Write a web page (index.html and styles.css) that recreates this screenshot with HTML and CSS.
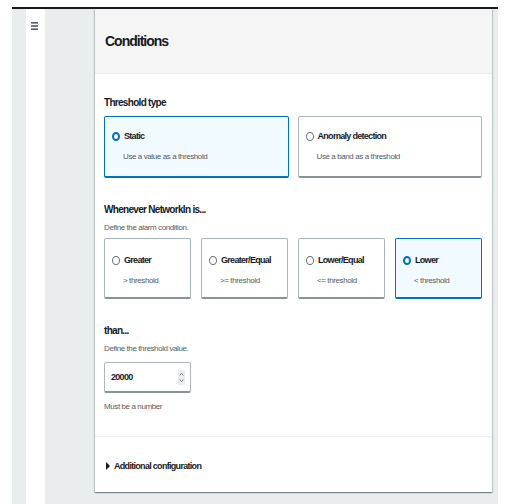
FILE: index.html
```html
<!DOCTYPE html>
<html lang="en">
<head>
    <meta charset="UTF-8">
    <meta name="viewport" content="width=device-width, initial-scale=1.0">
    <title>Conditions</title>
    <link rel="stylesheet" href="styles.css">
</head>
<body>
    <div class="frame">
        <nav class="rail">
            <svg class="menu-icon" width="7" height="8" viewBox="0 0 7 8">
                <rect x="0" y="0" width="7" height="1.6" fill="#545b64"/>
                <rect x="0" y="3.2" width="7" height="1.6" fill="#545b64"/>
                <rect x="0" y="6.4" width="7" height="1.6" fill="#545b64"/>
            </svg>
        </nav>

        <main class="content">
            <section class="panel">
                <header class="panel-head">
                    <h2>Conditions</h2>
                </header>

                <div class="panel-body">
                    <div class="field first">
                        <div class="label">Threshold type</div>
                        <div class="tiles two">
                            <div class="tile selected">
                                <div class="tile-title"><span class="radio on"></span>Static</div>
                                <div class="tile-desc">Use a value as a threshold</div>
                            </div>
                            <div class="tile">
                                <div class="tile-title"><span class="radio"></span>Anomaly detection</div>
                                <div class="tile-desc">Use a band as a threshold</div>
                            </div>
                        </div>
                    </div>

                    <div class="field">
                        <div class="label">Whenever NetworkIn is...</div>
                        <div class="hint">Define the alarm condition.</div>
                        <div class="tiles four">
                            <div class="tile">
                                <div class="tile-title"><span class="radio"></span>Greater</div>
                                <div class="tile-desc">&gt; threshold</div>
                            </div>
                            <div class="tile">
                                <div class="tile-title"><span class="radio"></span>Greater/Equal</div>
                                <div class="tile-desc">&gt;= threshold</div>
                            </div>
                            <div class="tile">
                                <div class="tile-title"><span class="radio"></span>Lower/Equal</div>
                                <div class="tile-desc">&lt;= threshold</div>
                            </div>
                            <div class="tile selected">
                                <div class="tile-title"><span class="radio on"></span>Lower</div>
                                <div class="tile-desc">&lt; threshold</div>
                            </div>
                        </div>
                    </div>

                    <div class="field">
                        <div class="label">than...</div>
                        <div class="hint">Define the threshold value.</div>
                        <div class="number-input">
                            <span>20000</span>
                            <svg class="spinner" width="7" height="15" viewBox="0 0 7 15">
                                <rect width="7" height="15" fill="#eaeded"/>
                                <path d="M1.8 5.5 L3.5 3.2 L5.2 5.5" fill="none" stroke="#687078" stroke-width="0.8"/>
                                <path d="M1.8 9.5 L3.5 11.8 L5.2 9.5" fill="none" stroke="#687078" stroke-width="0.8"/>
                            </svg>
                        </div>
                        <div class="hint after">Must be a number</div>
                    </div>
                </div>

                <div class="expander">
                    <span class="caret"></span>Additional configuration
                </div>
            </section>
        </main>
    </div>
</body>
</html>
```

FILE: styles.css
```css
body {
    margin: 0;
    background: #fff;
    color: #16191f;
    font-family: "Liberation Sans", Arial, sans-serif;
    letter-spacing: -0.7px;
}
.frame {
    display: flex;
    height: 495px;
    margin: 7px 16px 0 12px;
    border-top: 2px solid #16191f;
    background: #eaeded;
}
.rail {
    width: 19px;
    margin-left: 14px;
    background: #fff;
}
.menu-icon {
    display: block;
    margin: 13px 0 0 5px;
}
.content {
    flex: 1;
    padding: 0 6px 0 50px;
}
.panel {
    height: 483px;
    background: #fff;
    box-shadow: 0 1px 1px 0 rgba(0, 28, 36, 0.3), 1px 1px 1px 0 rgba(0, 28, 36, 0.15), -1px 1px 1px 0 rgba(0, 28, 36, 0.15);
}
.panel-head {
    display: flex;
    align-items: center;
    height: 64px;
    padding: 0 10px;
    background: #f5f5f5;
    border-bottom: 1px solid #eaeded;
}
.panel-head h2 {
    margin: 0;
    font-size: 14px;
    font-weight: bold;
    letter-spacing: -1px;
}
.panel-body {
    padding: 0 10px 24px 9px;
    border-bottom: 1px solid #eaeded;
}
.field {
    margin-top: 25px;
}
.field.first {
    margin-top: 22px;
}
.label {
    font-size: 10px;
    line-height: 14px;
    font-weight: bold;
}
.hint {
    margin-top: 5px;
    font-size: 8px;
    line-height: 11px;
    color: #545b64;
    letter-spacing: -0.4px;
}
.hint.after {
    margin-top: 8px;
}
.tiles {
    display: grid;
    margin-top: 6px;
}
.tiles.two {
    grid-template-columns: 1fr 1fr;
    gap: 9px;
}
.tiles.four {
    grid-template-columns: repeat(4, 1fr);
    margin-top: 5px;
    gap: 10px;
}
.tile {
    box-sizing: border-box;
    height: 62px;
    padding: 13px 7px 0;
    border: 1px solid #aab7b8;
    border-bottom: 2px solid #879596;
    border-radius: 2px;
    background: #fff;
}
.tiles.four .tile {
    height: 61px;
    padding-top: 15px;
}
.tile.selected {
    background: #f1faff;
    border-color: #0073bb;
}
.tile-title {
    display: flex;
    align-items: center;
    font-size: 9px;
    line-height: 12px;
    font-weight: bold;
}
.tile-desc {
    margin-top: 9px;
    padding-left: 11px;
    font-size: 8px;
    line-height: 11px;
    color: #545b64;
    letter-spacing: -0.4px;
}
.radio {
    box-sizing: border-box;
    flex: none;
    width: 8px;
    height: 9px;
    margin-right: 4px;
    border: 1px solid #687078;
    border-radius: 50%;
    background: #fff;
}
.radio.on {
    border: 2.5px solid #0073bb;
}
.number-input {
    display: flex;
    align-items: center;
    justify-content: space-between;
    box-sizing: border-box;
    width: 87px;
    height: 31px;
    margin-top: 8px;
    padding: 0 5px 0 6px;
    border: 1px solid #aab7b8;
    border-bottom: 2px solid #879596;
    border-radius: 2px;
    font-size: 9px;
    font-weight: bold;
}
.spinner {
    display: block;
}
.expander {
    display: flex;
    align-items: center;
    padding: 24px 10px 0 11px;
    font-size: 9px;
    font-weight: bold;
}
.caret {
    width: 0;
    height: 0;
    margin-right: 4px;
    border-top: 4px solid transparent;
    border-bottom: 4px solid transparent;
    border-left: 4px solid #16191f;
}
```
